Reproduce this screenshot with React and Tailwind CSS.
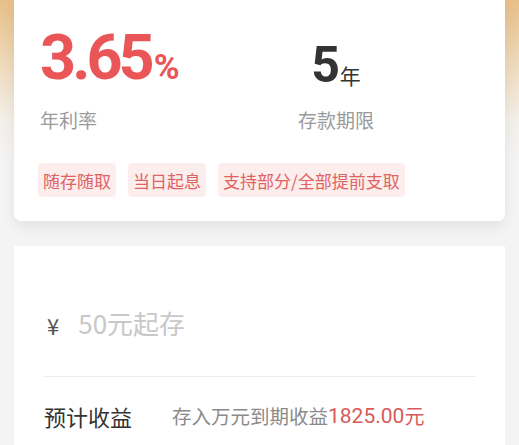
export default function App() {
  const cjk = { fontFamily: '"Noto Sans CJK SC", "Noto Sans", sans-serif' };
  const num = { fontFamily: 'Roboto, "Noto Sans CJK SC", sans-serif' };
  return (
    <div
      className="w-[519px] h-[445px] overflow-hidden bg-[linear-gradient(180deg,#e8bf88_0px,#efdcc0_70px,#f3efe9_120px,#f4f4f4_160px)]"
      style={cjk}
    >
      <div className="mx-[14px] -mt-[8px] h-[229px] rounded-[7px] bg-white shadow-[0_6px_14px_rgba(0,0,0,0.07)] pl-[26px] pt-[34px]">
        <div className="flex">
          <div className="w-[256px]">
            <div className="flex items-baseline h-[60px] text-[#ea5657] font-bold" style={num}>
              <span className="text-[63px] leading-none tracking-[-4px]">3.65</span>
              <span className="text-[35px] leading-none ml-[3px]">%</span>
            </div>
            <div className="mt-[24px] text-[19px] leading-none text-[#9a9a9a]">年利率</div>
          </div>
          <div className="w-[80px] flex flex-col items-center">
            <div className="flex items-end h-[64px] text-[#333]">
              <span className="text-[50px] leading-none font-bold" style={num}>5</span>
              <span className="text-[21px] leading-none mb-[4px]">年</span>
            </div>
            <div className="mt-[20px] text-[19px] leading-none text-[#9a9a9a] whitespace-nowrap">存款期限</div>
          </div>
        </div>
        <div className="mt-[34px] -ml-[2px] flex gap-[12px]">
          {["随存随取", "当日起息", "支持部分/全部提前支取"].map((t) => (
            <div
              key={t}
              className="h-[34px] px-[5px] flex items-center rounded-[4px] bg-[#fdeeee] text-[#e06363] text-[17px] leading-none whitespace-nowrap"
            >
              {t}
            </div>
          ))}
        </div>
      </div>
      <div className="mx-[14px] mt-[25px] h-[220px] bg-white px-[29px]">
        <div className="h-[130px] flex items-end pb-[40px] pl-[4px]">
          <span className="text-[22px] leading-none text-[#555] mr-[19px]">¥</span>
          <span className="text-[26px] leading-none text-[#c8c8c8]">50元起存</span>
        </div>
        <div className="h-px bg-[#ececec]" />
        <div className="flex items-center h-[78px] pl-[1px]">
          <span className="text-[22px] leading-none text-[#333] w-[128px]">预计收益</span>
          <span className="text-[19.5px] leading-none text-[#8a8a8a]">存入万元到期收益</span>
          <span className="text-[21px] leading-none text-[#d95a5a]" style={num}>1825.00</span>
          <span className="text-[20px] leading-none text-[#d95a5a]">元</span>
        </div>
      </div>
    </div>
  );
}
